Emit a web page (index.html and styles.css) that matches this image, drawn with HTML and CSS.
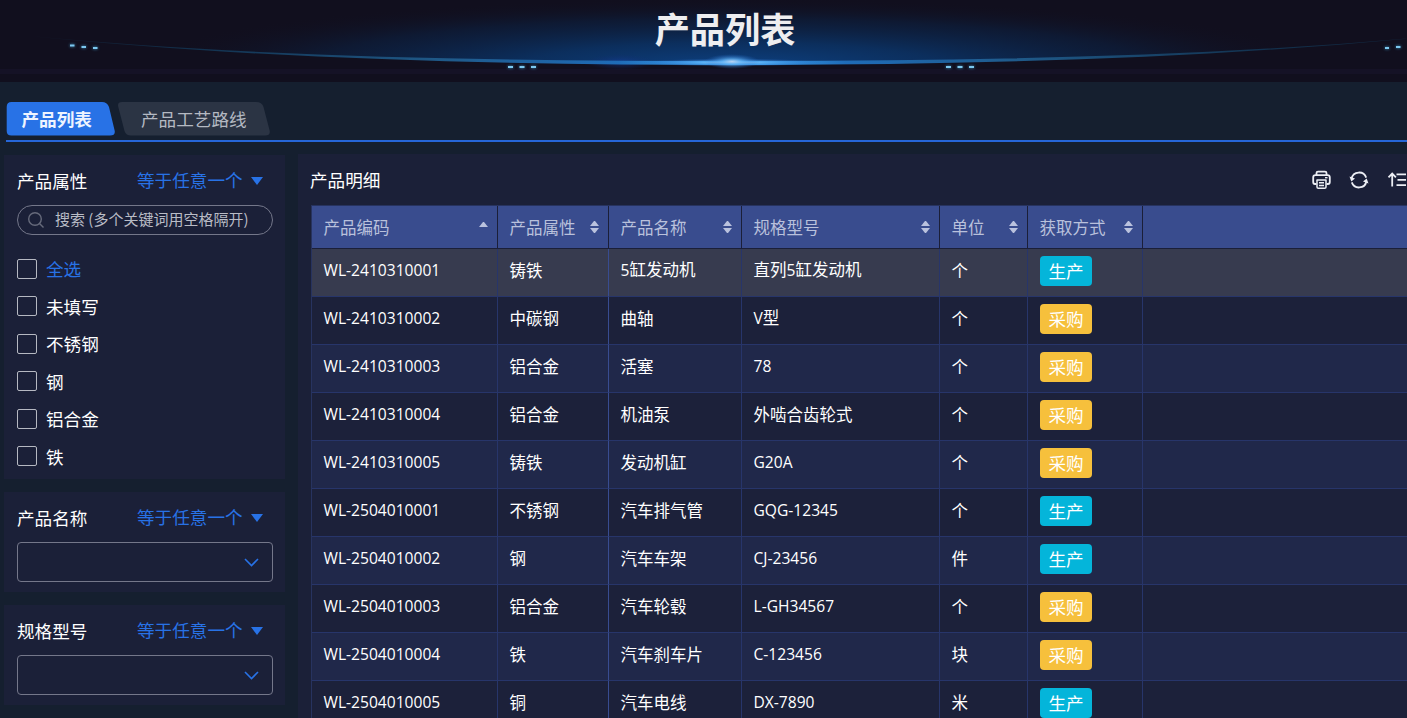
FILE: index.html
```html
<!DOCTYPE html>
<html lang="zh-CN">
<head>
    <meta charset="UTF-8">
    <meta name="viewport" content="width=device-width, initial-scale=1.0">
    <title>产品列表</title>
    <link rel="stylesheet" href="styles.css">
</head>
<body>
    <header class="banner">
        <svg class="banner-bg" width="1464" height="82" viewBox="0 0 1464 82">
            <defs>
                <radialGradient id="glow" gradientUnits="userSpaceOnUse" cx="0" cy="0" r="1" gradientTransform="translate(732 66) scale(600 68)">
                    <stop offset="0" stop-color="#0d4080"/>
                    <stop offset="0.35" stop-color="#0b3264" stop-opacity="0.9"/>
                    <stop offset="0.7" stop-color="#0b2448" stop-opacity="0.5"/>
                    <stop offset="1" stop-color="#110f1e" stop-opacity="0"/>
                </radialGradient>
                <linearGradient id="beam" gradientUnits="userSpaceOnUse" x1="20" y1="0" x2="1444" y2="0">
                    <stop offset="0" stop-color="#12304c" stop-opacity="0"/>
                    <stop offset="0.12" stop-color="#12304c"/>
                    <stop offset="0.3" stop-color="#1f5a8a"/>
                    <stop offset="0.42" stop-color="#1f6cb8"/>
                    <stop offset="0.5" stop-color="#45b0ff"/>
                    <stop offset="0.58" stop-color="#1f6cb8"/>
                    <stop offset="0.7" stop-color="#1f5a8a"/>
                    <stop offset="0.88" stop-color="#12304c"/>
                    <stop offset="1" stop-color="#12304c" stop-opacity="0.5"/>
                </linearGradient>
                <radialGradient id="flare">
                    <stop offset="0" stop-color="#b9d3f2"/>
                    <stop offset="0.35" stop-color="#5fb2f5" stop-opacity="0.75"/>
                    <stop offset="1" stop-color="#1c62c0" stop-opacity="0"/>
                </radialGradient>
                <radialGradient id="halo">
                    <stop offset="0" stop-color="#143f9c" stop-opacity="0.6"/>
                    <stop offset="1" stop-color="#122a70" stop-opacity="0"/>
                </radialGradient>
            </defs>
            <path fill="url(#glow)" d="M20 0V35C250 58 500 62 732 62S1214 58 1444 35V0Z"/>
            <rect y="69" width="1464" height="5" fill="#151226"/>
            <ellipse cx="620" cy="62" rx="34" ry="8" fill="url(#halo)"/>
            <path fill="url(#beam)" d="M20 35C250 57.500 500 61 732 61S1214 57.500 1444 35C1214 59 964 65 732 65S250 59 20 35Z"/>
            <ellipse cx="732" cy="62.500" rx="90" ry="4" fill="url(#flare)"/>
            <ellipse cx="732" cy="61.500" rx="28" ry="7.500" fill="url(#flare)"/>
            <g class="dots">
                <rect x="70" y="44.5" width="4.5" height="2"/>
                <rect x="81.5" y="46" width="4.5" height="2"/>
                <rect x="93" y="47" width="4.5" height="2"/>
                <rect x="508" y="66" width="5" height="2"/>
                <rect x="519.5" y="66" width="5" height="2"/>
                <rect x="531" y="66" width="5" height="2"/>
                <rect x="946" y="66" width="5" height="2"/>
                <rect x="957.5" y="66" width="5" height="2"/>
                <rect x="969" y="66" width="5" height="2"/>
                <rect x="1385" y="47" width="4" height="2"/>
                <rect x="1396" y="46" width="4.5" height="2"/>
            </g>
        </svg>
        <h1>产品列表</h1>
    </header>

    <nav class="tabs">
        <a class="tab active">
            <svg width="109" height="34" viewBox="0 0 109 34"><path d="M5.500 0H96Q101 0 103 5L108.500 28Q110 33.500 104 33.500H5.500Q0.700 33.500 0.700 29V5Q0.700 0 5.500 0Z"/></svg>
            <span>产品列表</span>
        </a>
        <a class="tab">
            <svg width="152" height="34" viewBox="0 0 152 34"><path d="M4 0H138Q144 0 145.500 5L151.500 28Q153 33.500 147 33.500H13Q8 33.500 6.500 29L0.300 5Q-1 0 4 0Z"/></svg>
            <span>产品工艺路线</span>
        </a>
    </nav>

    <main class="content">
        <aside class="filters">
            <section class="filter filter-list">
                <div class="filter-head"><h2>产品属性</h2><span class="operator">等于任意一个</span><i class="caret"></i></div>
                <div class="search">
                    <svg width="17" height="17" viewBox="0 0 17 17" fill="none" stroke="#666a7b" stroke-width="1.400"><circle cx="7" cy="7" r="6.300"/><path d="M11.500 11.500L15.500 15.500"/></svg>
                    <span>搜索 (多个关键词用空格隔开)</span>
                </div>
                <ul class="options">
                    <li class="all"><i></i>全选</li>
                    <li><i></i>未填写</li>
                    <li><i></i>不锈钢</li>
                    <li><i></i>钢</li>
                    <li><i></i>铝合金</li>
                    <li><i></i>铁</li>
                </ul>
            </section>
            <section class="filter">
                <div class="filter-head"><h2>产品名称</h2><span class="operator">等于任意一个</span><i class="caret"></i></div>
                <div class="select"><svg width="15" height="9" viewBox="0 0 15 9"><path d="M1 1L7.500 7.500L14 1"/></svg></div>
            </section>
            <section class="filter">
                <div class="filter-head"><h2>规格型号</h2><span class="operator">等于任意一个</span><i class="caret"></i></div>
                <div class="select"><svg width="15" height="9" viewBox="0 0 15 9"><path d="M1 1L7.500 7.500L14 1"/></svg></div>
            </section>
        </aside>

        <section class="detail">
            <div class="detail-head">
                <h2>产品明细</h2>
                <div class="tools">
                    <svg width="20" height="20" viewBox="0 0 20 20" fill="none" stroke="#eceef4" stroke-width="1.800" stroke-linejoin="round"><path d="M5.500 5V3Q5.500 1.600 7 1.600H14Q15.500 1.600 15.500 3V5M5.500 14H4Q2.200 14 2.200 12V7.500Q2.200 5.200 4.500 5.200H16.500Q18.800 5.200 18.800 7.500V12Q18.800 14 17 14H15.500"/><path d="M6 10H15V17Q15 18.300 13.700 18.300H7.300Q6 18.300 6 17ZM8 12.800H13M8 15.400H13" stroke-width="1.500"/><path d="M14 7.700H16.500" stroke-width="1.400"/></svg>
                    <svg width="20" height="20" viewBox="0 0 20 20" fill="none" stroke="#eceef4" stroke-width="1.800"><path d="M2.600 8.500A7.600 7.600 0 0 1 17.200 7.600M17.400 11.500A7.600 7.600 0 0 1 2.800 12.400"/><path fill="#eceef4" stroke="none" d="M0.500 6.500L6 8.500L2.300 11.500ZM19.500 13.500L14 11.500L17.700 8.500Z"/></svg>
                    <svg width="20" height="20" viewBox="0 0 20 20" fill="none" stroke="#eceef4" stroke-width="1.800"><path d="M5.200 16.500V3.500M1.500 7.300L5.200 3.500L8.900 7.300M9.500 4.300H19M10.500 9.800H19M9.500 15.200H19"/></svg>
                </div>
            </div>
            <table>
                <colgroup>
                    <col class="c-code"><col class="c-attr"><col class="c-name"><col class="c-spec"><col class="c-unit"><col class="c-way"><col>
                </colgroup>
                <thead>
                    <tr>
                        <th><div>产品编码<i class="sort asc"></i></div></th>
                        <th><div>产品属性<i class="sort"></i></div></th>
                        <th><div>产品名称<i class="sort"></i></div></th>
                        <th><div>规格型号<i class="sort"></i></div></th>
                        <th><div>单位<i class="sort"></i></div></th>
                        <th><div>获取方式<i class="sort"></i></div></th>
                        <th></th>
                    </tr>
                </thead>
                <tbody id="rows"></tbody>
            </table>
        </section>
    </main>

    <script>
        const products = [
            ['WL-2410310001', '铸铁', '5缸发动机', '直列5缸发动机', '个', '生产'],
            ['WL-2410310002', '中碳钢', '曲轴', 'V型', '个', '采购'],
            ['WL-2410310003', '铝合金', '活塞', '78', '个', '采购'],
            ['WL-2410310004', '铝合金', '机油泵', '外啮合齿轮式', '个', '采购'],
            ['WL-2410310005', '铸铁', '发动机缸', 'G20A', '个', '采购'],
            ['WL-2504010001', '不锈钢', '汽车排气管', 'GQG-12345', '个', '生产'],
            ['WL-2504010002', '钢', '汽车车架', 'CJ-23456', '件', '生产'],
            ['WL-2504010003', '铝合金', '汽车轮毂', 'L-GH34567', '个', '采购'],
            ['WL-2504010004', '铁', '汽车刹车片', 'C-123456', '块', '采购'],
            ['WL-2504010005', '铜', '汽车电线', 'DX-7890', '米', '生产']
        ];

        // latin text sits in its own span so it gets the narrower font
        const cell = text => text.replace(/[A-Za-z0-9-]+/g, '<span class="latin">$&</span>');

        document.getElementById('rows').innerHTML = products.map(p => {
            const tag = p[5] === '生产' ? 'make' : 'buy';
            const cells = p.slice(0, 5).map(t => `<td>${cell(t)}</td>`).join('');
            return `<tr>${cells}<td><span class="tag ${tag}">${p[5]}</span></td><td></td></tr>`;
        }).join('');
    </script>
</body>
</html>
```
FILE: styles.css
```css
* {
    box-sizing: border-box;
}

body {
    margin: 0;
    height: 718px;
    overflow: hidden;
    background-color: #151f2f;
    color: #fff;
    font-family: "Noto Sans CJK SC", sans-serif;
    font-size: 17.6px;
}

h1, h2, ul {
    margin: 0;
    padding: 0;
    font-weight: 400;
}

i {
    display: block;
}

.banner {
    position: relative;
    height: 82px;
    overflow: hidden;
    background-color: #110f1e;
}

.banner-bg {
    position: absolute;
    top: 0;
    left: 0;
}

.dots {
    fill: #7cc8f0;
    filter: drop-shadow(0 0 1.5px #3f9fd0);
}

.banner h1 {
    position: relative;
    width: 1450px;
    text-align: center;
    font-size: 35.2px;
    font-weight: 700;
    line-height: 56px;
    color: #eeeef0;
}

/* tabs */
.tabs {
    display: flex;
    gap: 3px;
    height: 60px;
    margin-left: 6px;
    padding-top: 20px;
    border-bottom: 2px solid #2666d8;
}

.tab {
    position: relative;
    width: 109px;
    height: 34px;
    padding-left: 15.5px;
    line-height: 34px;
    color: #b4b9c2;
}

.tab + .tab {
    width: 152px;
    padding-left: 23px;
}

.tab svg {
    position: absolute;
    top: 0;
    left: 0;
    fill: #2b3444;
}

.tab span {
    position: relative;
}

.tab.active {
    color: #eef4ff;
    font-weight: 700;
}

.tab.active svg {
    fill: #2872e6;
}

.content {
    display: flex;
    gap: 13px;
    padding: 12px 0 0 4px;
}

/* filters */
.filters {
    display: flex;
    flex-direction: column;
    gap: 13px;
    width: 281px;
    padding-top: 1px;
}

.filter {
    height: 100px;
    padding: 12px 12px 0 13px;
    background-color: #1b2038;
}

.filter-list {
    height: 324px;
}

.filter-head {
    display: flex;
    align-items: center;
    height: 28px;
}

.filter-head h2 {
    width: 120px;
    font-size: 17.6px;
    line-height: 28px;
}

.operator {
    color: #2872e6;
    line-height: 26px;
    margin-top: -2px;
}

.caret {
    margin-left: 8px;
    border: 6.5px solid transparent;
    border-top: 8px solid #2872e6;
    border-bottom: 0;
}

.search {
    display: flex;
    align-items: center;
    gap: 10px;
    height: 30px;
    margin-top: 10px;
    padding-left: 10px;
    border: 1px solid #74778a;
    border-radius: 15px;
    color: #b9bcc6;
    font-size: 15px;
    line-height: 26px;
    white-space: nowrap;
}

.search span {
    padding-bottom: 2px;
}

.options {
    list-style: none;
    margin-top: 15px;
}

.options li {
    display: flex;
    gap: 9px;
    height: 37.5px;
    line-height: 37px;
}

.options i {
    width: 20px;
    height: 20px;
    margin-top: 8.5px;
    border: 1px solid #b6b9c2;
    border-radius: 2px;
}

.options .all {
    color: #2872e6;
}

.select {
    display: flex;
    align-items: center;
    justify-content: flex-end;
    height: 40px;
    margin-top: 10px;
    padding-right: 13px;
    border: 1px solid #74778a;
    border-radius: 4px;
}

.select svg {
    fill: none;
    stroke: #2872e6;
    stroke-width: 1.6;
}

/* detail table */
.detail {
    flex: 1;
    height: 564px;
    overflow: hidden;
    padding-left: 13px;
    background-color: #1b2038;
}

.detail-head {
    display: flex;
    justify-content: space-between;
    height: 51px;
    margin-left: -1px;
}

.detail-head h2 {
    font-size: 17.6px;
    line-height: 52px;
}

.tools {
    display: flex;
    gap: 18px;
    padding-top: 16px;
}

.tools svg {
    flex: none;
}

table {
    width: 100%;
    table-layout: fixed;
    border-collapse: separate;
    border-spacing: 0;
    border-top: 1px solid #27335f;
    border-left: 1px solid #27335f;
    font-size: 16.5px;
}

.c-code { width: 186px; }
.c-attr { width: 111px; }
.c-name { width: 133px; }
.c-spec { width: 198px; }
.c-unit { width: 88px; }
.c-way { width: 115px; }

th {
    height: 43px;
    padding: 0 9px 0 11.5px;
    background-color: #394c8e;
    border-right: 1px solid #1b1f38;
    border-bottom: 1px solid #1b1f38;
    color: #b9c1dc;
    font-weight: 400;
    text-align: left;
}

th div {
    display: flex;
    align-items: center;
    justify-content: space-between;
    height: 42px;
    line-height: 40px;
}

.sort {
    width: 9px;
    height: 12px;
    margin-top: -1px;
}

.sort::before,
.sort::after {
    content: "";
    display: block;
    border: 4.5px solid transparent;
}

.sort::before {
    border-top: 0;
    border-bottom: 5px solid #bac2de;
}

.sort::after {
    margin-top: 2px;
    border-bottom: 0;
    border-top: 5px solid #bac2de;
}

.sort.asc {
    margin-top: 1px;
}

.sort.asc::after {
    visibility: hidden;
}

td {
    height: 48px;
    padding: 0 11.5px 6px;
    border-right: 1px solid #27356a;
    border-bottom: 1px solid #27356a;
    line-height: 24px;
    white-space: nowrap;
}

td:nth-child(2) {
    border-right-color: #384c90;
}

th:last-child,
td:last-child {
    border-right: 0;
}

tbody tr {
    background-color: #1c213a;
}

tbody tr:nth-child(odd) {
    background-color: #20284a;
}

tbody tr:first-child {
    background-color: #373b4f;
}

.latin {
    font-family: "Open Sans", sans-serif;
    font-size: 15.6px;
}

td:nth-child(6) {
    padding: 0 12px;
}

.tag {
    display: block;
    width: 52px;
    height: 30px;
    margin-top: -3px;
    border-radius: 4px;
    font-size: 17.6px;
    line-height: 30px;
    text-align: center;
}

.make { background-color: #04b5da; }
.buy { background-color: #f6c03c; }
```
